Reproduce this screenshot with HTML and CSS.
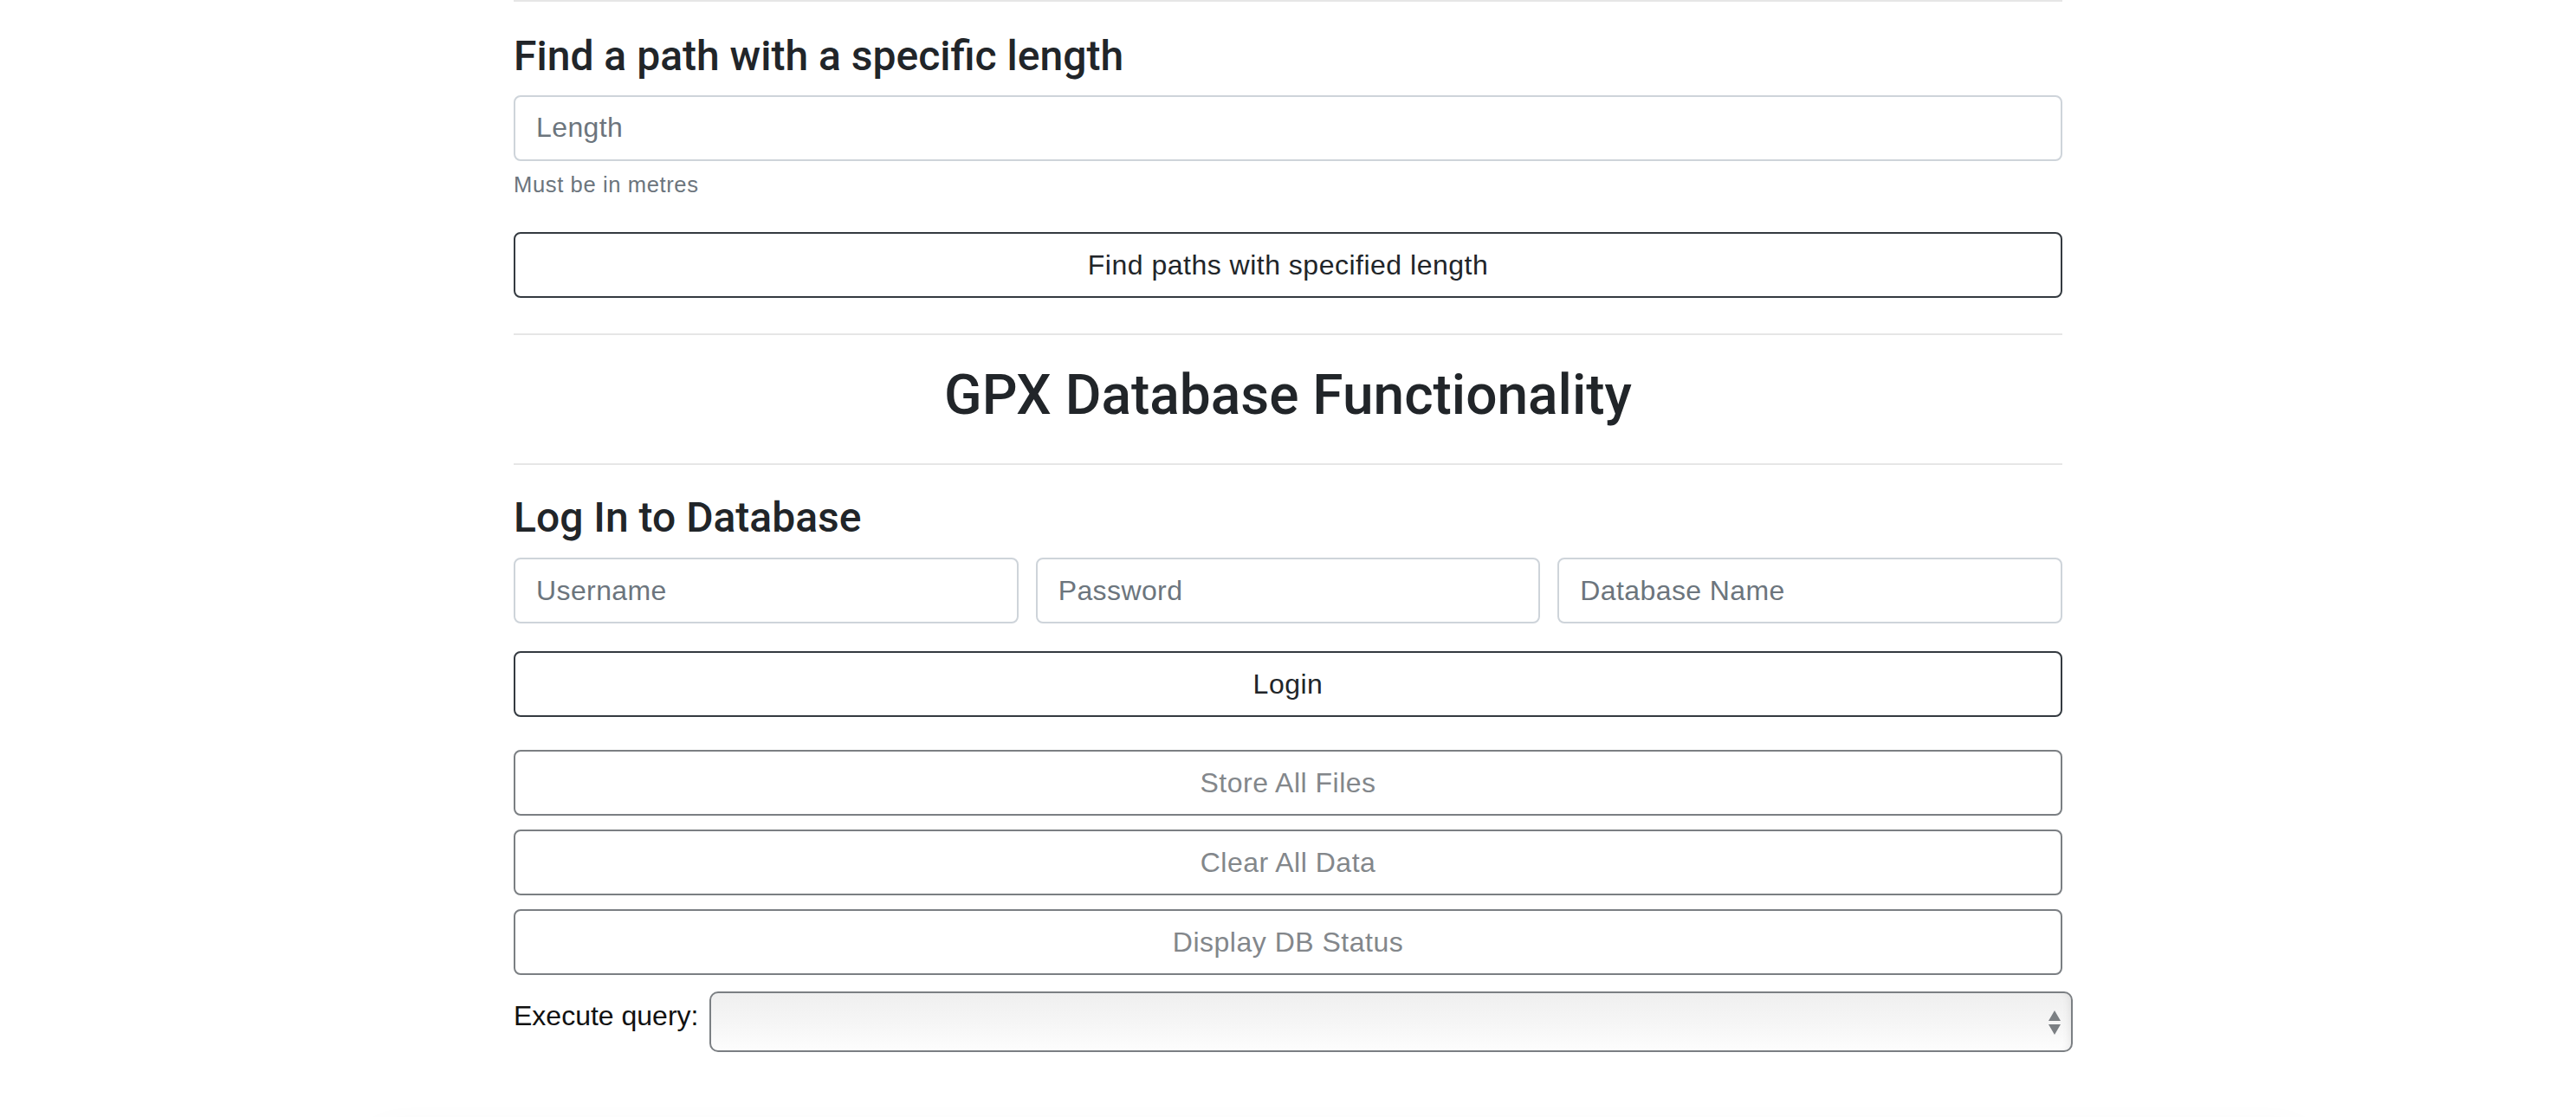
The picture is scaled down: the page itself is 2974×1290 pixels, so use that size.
FILE: index.html
```html
<!DOCTYPE html>
<html lang="en">
<head>
<meta charset="utf-8">
<title>GPX Database Functionality</title>
<link rel="stylesheet" href="styles.css">
</head>
<body>
<div class="page">
  <main class="container">
    <hr class="divider divider-first">
    <section class="path-length">
      <h4 class="heading-sm">Find a path with a specific length</h4>
      <div class="group">
        <input class="field" type="text" placeholder="Length">
        <small class="hint">Must be in metres</small>
      </div>
      <button class="btn btn-dark btn-find" type="button">Find paths with specified length</button>
    </section>

    <hr class="divider">
    <h2 class="heading-lg">GPX Database Functionality</h2>
    <hr class="divider">

    <section class="login">
      <h4 class="heading-sm heading-login">Log In to Database</h4>
      <div class="field-row">
        <input class="field" type="text" placeholder="Username">
        <input class="field" type="password" placeholder="Password">
        <input class="field" type="text" placeholder="Database Name">
      </div>
      <button class="btn btn-dark btn-login" type="button">Login</button>
      <div class="db-actions">
        <button class="btn btn-muted" type="button">Store All Files</button>
        <button class="btn btn-muted" type="button">Clear All Data</button>
        <button class="btn btn-muted" type="button">Display DB Status</button>
      </div>
      <div class="query-row">
        <label class="query-label" for="query">Execute query:</label>
        <div class="select-wrap">
          <select class="query-select" id="query"></select>
          <svg class="select-arrows" width="14" height="28" viewBox="0 0 14 28" aria-hidden="true">
            <path d="M7 0 L14 12 L0 12 Z" fill="#7b7f83"/>
            <path d="M0 16 L14 16 L7 28 Z" fill="#7b7f83"/>
          </svg>
        </div>
      </div>
    </section>
  </main>
  <div class="next-card"></div>
</div>
</body>
</html>
```

FILE: styles.css
```css
html, body {
  margin: 0;
  padding: 0;
  background: #ffffff;
}

body {
  font-family: "Liberation Sans", Arial, sans-serif;
  font-size: 32px;
  line-height: 1.5;
  color: #212529;
}

.page {
  height: 1290px;
  overflow: hidden;
}

.container {
  width: 1788px;
  margin: 0 auto;
}

.divider {
  height: 0;
  border: 0;
  border-top: 2px solid #e6e6e6;
  margin: 32px 0;
}

.divider-first {
  margin-top: 0;
  margin-bottom: 34px;
}

.heading-sm {
  font-family: Roboto, "Liberation Sans", sans-serif;
  font-weight: 500;
  font-size: 48px;
  line-height: 1.2;
  margin: 0 0 16px;
  color: #212529;
}

.heading-login {
  margin-bottom: 18px;
}

.heading-lg {
  font-family: Roboto, "Liberation Sans", sans-serif;
  font-weight: 500;
  font-size: 64px;
  line-height: 1.2;
  text-align: center;
  margin: 0 0 39px;
  color: #212529;
}

.group {
  margin-bottom: 36px;
}

.field {
  display: block;
  width: 100%;
  box-sizing: border-box;
  height: 76px;
  margin: 0;
  padding: 12px 24px;
  font-family: inherit;
  font-size: 32px;
  line-height: 1.5;
  letter-spacing: 0.4px;
  color: #495057;
  background: #ffffff;
  border: 2px solid #ced4da;
  border-radius: 8px;
  outline: none;
}

.field::placeholder {
  color: #6c757d;
  opacity: 1;
}

.hint {
  display: block;
  margin-top: 8px;
  font-size: 25.6px;
  line-height: 1.5;
  letter-spacing: 0.6px;
  color: #6c757d;
}

.btn {
  display: block;
  width: 100%;
  box-sizing: border-box;
  height: 76px;
  margin: 0;
  padding: 12px 24px;
  font-family: inherit;
  font-size: 32px;
  line-height: 1.5;
  letter-spacing: 0.5px;
  text-align: center;
  background: #ffffff;
  border-radius: 8px;
  cursor: pointer;
}

.btn-dark {
  border: 2px solid #343a40;
  color: #212529;
}

.btn-find {
  margin-bottom: 41px;
}

.btn-login {
  margin-bottom: 38px;
}

.btn-muted {
  border: 2px solid #7b7f83;
  color: #83878b;
}

.db-actions {
  display: flex;
  flex-direction: column;
  gap: 16px;
  margin-bottom: 19px;
}

.field-row {
  display: grid;
  grid-template-columns: repeat(3, 1fr);
  gap: 20px;
  margin-bottom: 32px;
}

.query-row {
  display: flex;
  align-items: center;
  gap: 10px;
}

.query-label {
  flex: none;
  width: 216px;
  white-space: nowrap;
  color: #111111;
  padding-bottom: 14px;
}

.select-wrap {
  position: relative;
  flex: none;
  width: 1574px;
}

.query-select {
  display: block;
  width: 100%;
  height: 70px;
  box-sizing: border-box;
  -webkit-appearance: none;
  appearance: none;
  border: 2px solid #7b7f83;
  border-radius: 10px;
  background: linear-gradient(#efefef, #f6f6f6 55%, #fdfdfd);
  box-shadow: inset -8px 0 8px -6px rgba(0, 0, 0, 0.08);
  font-family: inherit;
  font-size: 32px;
}

.select-arrows {
  position: absolute;
  right: 14px;
  top: 22px;
}

.next-card {
  width: 2220px;
  height: 200px;
  margin: 100px 0 0 436px;
  background: #ffffff;
  box-shadow: 0 -6px 40px rgba(0, 0, 0, 0.05);
}
```
